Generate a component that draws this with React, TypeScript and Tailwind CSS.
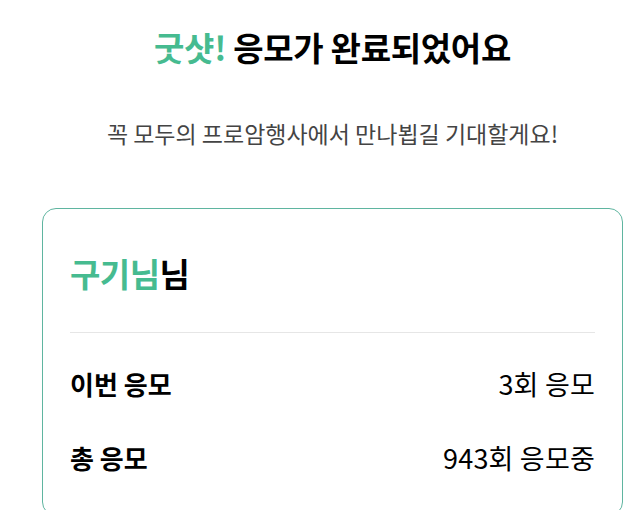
export default function App() {
  const rows = [
    { label: '이번 응모', value: '3회 응모' },
    { label: '총 응모', value: '943회 응모중' },
  ];

  return (
    <div
      className="min-h-screen bg-white pl-[42px] pr-[17px] text-black"
      style={{ fontFamily: '"Noto Sans CJK KR", "Noto Sans", sans-serif' }}
    >
      <h1 className="pt-[26px] text-center text-[33px] font-bold leading-[42px] tracking-[-0.3px]">
        <span className="text-[#46bb90]">굿샷!</span> 응모가 완료되었어요
      </h1>
      <p className="mt-[50px] text-center text-[23px] leading-[30px] text-[#444]">
        꼭 모두의 프로암행사에서 만나뵙길 기대할게요!
      </p>

      <div className="mt-[60px] rounded-[14px] border border-[#5fb5a0] px-[27px] pt-[42px] pb-10">
        <div className="text-[33px] font-bold leading-[44px] tracking-[-0.5px]">
          <span className="text-[#46bb90]">구기님</span>님
        </div>
        <div className="mt-[37px] h-px bg-[#e6e6e6]" />
        <div className="flex flex-col pt-[34px] gap-[40px]">
          {rows.map((r) => (
            <div key={r.label} className="flex items-center justify-between leading-[34px]">
              <span className="text-[26px] font-bold">{r.label}</span>
              <span className="text-[27px] tracking-[0.2px]">{r.value}</span>
            </div>
          ))}
        </div>
      </div>
    </div>
  );
}
